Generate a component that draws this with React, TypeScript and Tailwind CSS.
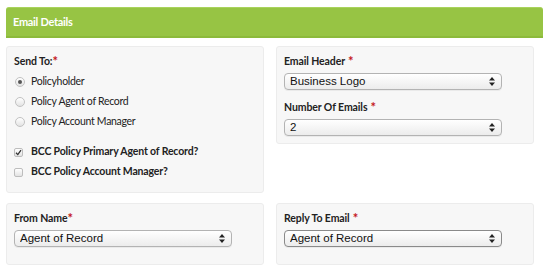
import React from "react";

const Req = ({ space }: { space?: boolean }) => (
  <span className={`text-[#c4161c] text-[13px] leading-none self-start mt-[1px] ${space ? "ml-[3px]" : ""}`}>*</span>
);

const Label = ({ text, space }: { text: string; space?: boolean }) => (
  <div className="h-[16px] flex items-center font-bold text-[10.5px] tracking-[-0.1px] text-[#222]">
    <span>{text}</span>
    <Req space={space} />
  </div>
);

const Arrows = () => (
  <svg width="6" height="9" viewBox="0 0 6 9" className="absolute right-[7px] top-[4px] pointer-events-none">
    <path d="M3 0 L6 3.5 L0 3.5 Z" fill="#222" />
    <path d="M3 9 L6 5.5 L0 5.5 Z" fill="#222" />
  </svg>
);

const Select = ({ value, dark }: { value: string; dark?: boolean }) => (
  <div className="relative w-[218px] h-[17px]">
    <select
      defaultValue={value}
      className={`block box-border appearance-none w-full h-[17px] py-0 m-0 rounded-[4px] border ${
        dark ? "border-[#8a8a8a]" : "border-[#b3b3b3]"
      } bg-gradient-to-b from-white to-[#ececec] pl-[5px] text-[11.5px] leading-[15px] text-[#111] shadow-[0_1px_0_rgba(0,0,0,0.05)]`}
      style={{ fontFamily: '"Liberation Sans", Arial, sans-serif' }}
    >
      <option>{value}</option>
    </select>
    <Arrows />
  </div>
);

const Radio = ({ checked, text }: { checked?: boolean; text: string }) => (
  <div className="h-[20px] flex items-center">
    <span className="w-[10px] h-[10px] ml-[1px] rounded-full border border-[#c2c2c2] bg-gradient-to-b from-white to-[#e3e3e3] flex items-center justify-center">
      {checked && <span className="w-[4px] h-[4px] rounded-full bg-[#555]" />}
    </span>
    <span className="ml-[6px] text-[10.5px] tracking-[-0.3px] text-[#222]">{text}</span>
  </div>
);

const Check = ({ checked, text }: { checked?: boolean; text: string }) => (
  <div className="h-[20px] flex items-center">
    <span className="w-[9px] h-[9px] rounded-[2px] border border-[#bdbdbd] bg-gradient-to-b from-white to-[#e3e3e3] flex items-center justify-center">
      {checked && (
        <svg width="7" height="7" viewBox="0 0 7 7">
          <path d="M1 3.8 L2.8 5.6 L6 1.2" stroke="#333" strokeWidth="1.3" fill="none" />
        </svg>
      )}
    </span>
    <span className="ml-[8px] font-bold text-[10.5px] tracking-[-0.15px] text-[#222]">{text}</span>
  </div>
);

const Panel = ({ children, className = "" }: { children: React.ReactNode; className?: string }) => (
  <div className={`bg-[#f7f7f7] border border-[#ececec] rounded-[3px] px-[7px] ${className}`}>{children}</div>
);

export default function App() {
  return (
    <div className="w-[550px] h-[273px] bg-white pt-[7px]" style={{ fontFamily: "Lato, 'Open Sans', sans-serif" }}>
      <div className="ml-[6px] w-[537px] h-[31px] rounded-t-[3px] bg-[#97c444] border-t border-t-[#a9d35c] border-b-2 border-b-[#8cba3b] flex items-center pl-[7px]">
        <span className="text-white font-bold text-[11px] tracking-[-0.3px]">Email Details</span>
      </div>
      <div className="ml-[6px] w-[538px] mt-[8px] grid grid-cols-2 items-start gap-y-[10px]">
        <div className="pr-[11px]">
          <Panel className="pt-[7px] pb-[10px]">
            <Label text="Send To:" />
            <div className="mt-[2px]">
              <Radio checked text="Policyholder" />
              <Radio text="Policy Agent of Record" />
              <Radio text="Policy Account Manager" />
            </div>
            <div className="mt-[10px]">
              <Check checked text="BCC Policy Primary Agent of Record?" />
              <Check text="BCC Policy Account Manager?" />
            </div>
          </Panel>
        </div>
        <div className="pl-[1px] pr-[10px]">
          <Panel className="pt-[7px] pb-[7px]">
            <Label text="Email Header" space />
            <div className="mt-[3px]">
              <Select value="Business Logo" />
            </div>
            <div className="mt-[10px]">
              <Label text="Number Of Emails" space />
            </div>
            <div className="mt-[3px]">
              <Select value="2" />
            </div>
          </Panel>
        </div>
        <div className="pr-[11px]">
          <Panel className="pt-[7px] pb-[17px]">
            <Label text="From Name" />
            <div className="mt-[3px]">
              <Select value="Agent of Record" />
            </div>
          </Panel>
        </div>
        <div className="pl-[1px] pr-[10px]">
          <Panel className="pt-[7px] pb-[17px]">
            <Label text="Reply To Email" space />
            <div className="mt-[3px]">
              <Select value="Agent of Record" dark />
            </div>
          </Panel>
        </div>
      </div>
    </div>
  );
}
